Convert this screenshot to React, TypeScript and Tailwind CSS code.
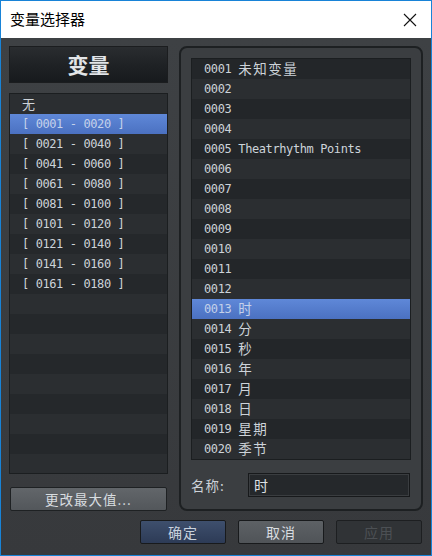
import React from 'react';

const mono = "font-['DejaVu_Sans_Mono','Noto_Sans_CJK_SC',monospace]";
const cjk = "font-['Noto_Sans_CJK_SC','Noto_Sans',sans-serif]";

const groups = [
  '无',
  '[ 0001 - 0020 ]',
  '[ 0021 - 0040 ]',
  '[ 0041 - 0060 ]',
  '[ 0061 - 0080 ]',
  '[ 0081 - 0100 ]',
  '[ 0101 - 0120 ]',
  '[ 0121 - 0140 ]',
  '[ 0141 - 0160 ]',
  '[ 0161 - 0180 ]',
];

const variables: { id: string; name: string; latin?: boolean }[] = [
  { id: '0001', name: '未知变量' },
  { id: '0002', name: '' },
  { id: '0003', name: '' },
  { id: '0004', name: '' },
  { id: '0005', name: 'Theatrhythm Points', latin: true },
  { id: '0006', name: '' },
  { id: '0007', name: '' },
  { id: '0008', name: '' },
  { id: '0009', name: '' },
  { id: '0010', name: '' },
  { id: '0011', name: '' },
  { id: '0012', name: '' },
  { id: '0013', name: '时' },
  { id: '0014', name: '分' },
  { id: '0015', name: '秒' },
  { id: '0016', name: '年' },
  { id: '0017', name: '月' },
  { id: '0018', name: '日' },
  { id: '0019', name: '星期' },
  { id: '0020', name: '季节' },
];

const selectedRow = 'bg-gradient-to-b from-[#5f88d8] to-[#4b71c1] text-[#c4d1ea]';
const monoText = `${mono} text-[12px] tracking-[-0.4px]`;

function LeftList() {
  const rows = Array.from({ length: 19 }, (_, i) => groups[i] ?? '');
  return (
    <div className="h-[381px] border border-[#1b1e20] bg-[#26292c] overflow-hidden">
      {rows.map((g, i) => (
        <div
          key={i}
          className={
            'h-[20px] flex items-center pl-[12px] ' +
            (i === 1 ? selectedRow : i % 2 === 0 ? 'bg-[#2b2e31] text-[#cdd3d9]' : 'bg-[#25282b] text-[#cdd3d9]')
          }
        >
          {i === 0 ? (
            <span className={`${cjk} text-[13px]`}>{g}</span>
          ) : (
            <span className={`${monoText} whitespace-pre`}>{g}</span>
          )}
        </div>
      ))}
    </div>
  );
}

function VarList() {
  return (
    <div className="h-[402px] border border-[#1b1e20] bg-[#26292c] overflow-hidden">
      {variables.map((v, i) => (
        <div
          key={v.id}
          className={
            'h-[20px] flex items-center pl-[12px] ' +
            (i === 12 ? selectedRow : i % 2 === 1 ? 'bg-[#2b2e31] text-[#cdd3d9]' : 'bg-[#232629] text-[#cdd3d9]')
          }
        >
          <span className={monoText}>{v.id}</span>
          {v.name && (
            <span
              className={
                'ml-[7px] ' + (v.latin ? monoText : `${cjk} text-[13.5px] tracking-[1.5px] -mt-[1px]`)
              }
            >
              {v.name}
            </span>
          )}
        </div>
      ))}
    </div>
  );
}

export default function App() {
  return (
    <div className="w-[432px] h-[556px] border border-[#1883d7] flex flex-col bg-[#3d4043]">
      {/* title bar */}
      <div className="h-[37px] bg-white flex items-center justify-between pl-[9px] pr-[14px]">
        <span className={`${cjk} text-[15px] text-black`}>变量选择器</span>
        <svg width="14" height="14" viewBox="0 0 14 14" className="mt-[1px]">
          <path d="M1 1L13 13M13 1L1 13" stroke="#111" strokeWidth="1.1" />
        </svg>
      </div>

      {/* body */}
      <div className="flex-1 flex flex-col bg-gradient-to-b from-[#3e4144] to-[#37393c]">
        <div className="flex pt-[8px] pl-[8px] pr-[7px] gap-[11px]">
          <div className="w-[159px] flex flex-col">
            <div className="h-[37px] border border-[#1b1d1f] bg-gradient-to-b from-[#2a2d30] via-[#1f2225] to-[#171a1d] flex items-center justify-center">
              <span className={`${cjk} text-[21px] font-bold text-[#e2e5e8]`}>变量</span>
            </div>
            <div className="mt-[10px]">
              <LeftList />
            </div>
            <button
              className={`${cjk} mt-[13px] ml-[1px] w-[157px] h-[24px] rounded-[2px] border border-[#1e2123] bg-gradient-to-b from-[#62666a] to-[#53575b] text-[13.5px] text-[#d9dde0] tracking-[1px] flex items-center justify-center`}
            >
              更改最大值...
            </button>
          </div>

          <div className="w-[244px] h-[465px] rounded-[8px] border-2 border-[#1d2022] bg-[#3b3e41] flex flex-col pt-[10px] px-[10px]">
            <VarList />
            <div className="flex items-center mt-[13px]">
              <span className={`${cjk} text-[13.5px] text-[#cdd3d9] w-[57px] tracking-[1px]`}>名称:</span>
              <div className="w-[162px] h-[24px] border border-[#17191b] bg-[#25282b] shadow-[inset_0_0_0_1px_#3a3d40] flex items-center pl-[5px]">
                <span className={`${cjk} text-[14px] text-[#dde1e4]`}>时</span>
              </div>
            </div>
          </div>
        </div>

        {/* bottom buttons */}
        <div className="flex justify-end gap-[12px] pr-[9px] pt-[9px]">
          <button
            className={`${cjk} w-[86px] h-[24px] rounded-[2px] border border-[#181a1c] bg-gradient-to-b from-[#3e4f6d] to-[#2d3b56] text-[14px] text-[#c9d2de] tracking-[1px] flex items-center justify-center`}
          >
            确定
          </button>
          <button
            className={`${cjk} w-[86px] h-[24px] rounded-[2px] border border-[#181a1c] bg-gradient-to-b from-[#5d6165] to-[#505458] text-[14px] text-[#d9dde0] tracking-[1px] flex items-center justify-center`}
          >
            取消
          </button>
          <button
            className={`${cjk} w-[86px] h-[24px] rounded-[2px] border border-[#1d1f21] bg-[#303336] text-[14px] text-[#4c5054] tracking-[1px] flex items-center justify-center`}
          >
            应用
          </button>
        </div>
      </div>
    </div>
  );
}
